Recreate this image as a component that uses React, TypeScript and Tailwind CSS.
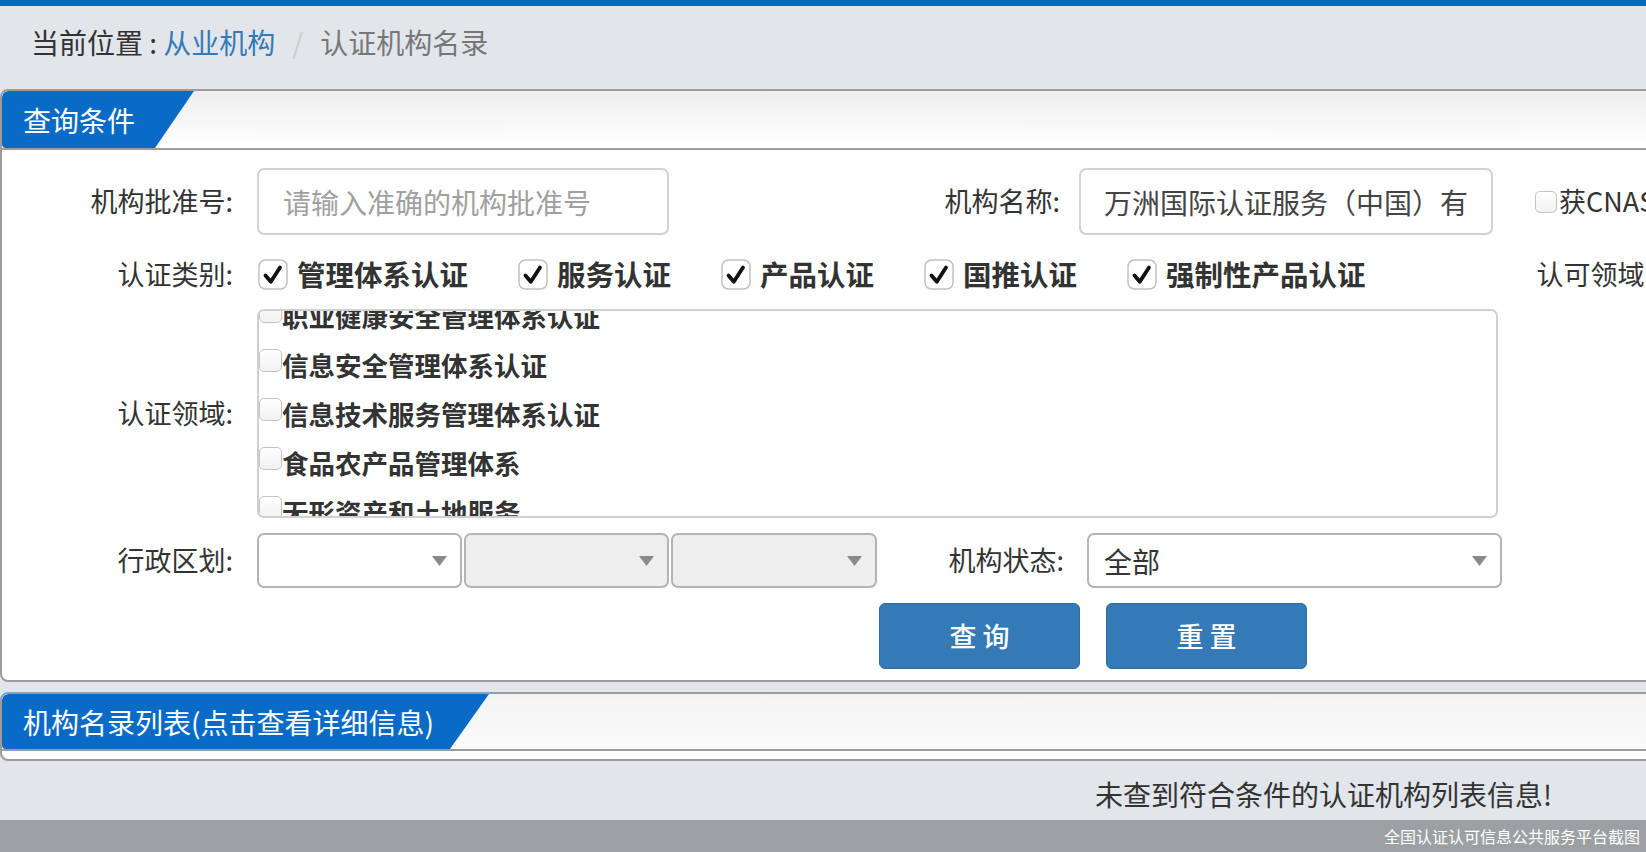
import React from "react";

function CheckedBox() {
  return (
    <svg width="30" height="31" viewBox="0 0 30 31" className="shrink-0">
      <rect x="1" y="1" width="28" height="29" rx="6.5" fill="#ffffff" stroke="#c2c2c2" strokeWidth="1.5" />
      <path d="M7.5 16.5 L12.8 22.8 L22 8.5" fill="none" stroke="#111" strokeWidth="3.8" strokeLinecap="round" strokeLinejoin="round" />
    </svg>
  );
}

function EmptyBox({ size = "w-[21px] h-[21px]" }: { size?: string }) {
  return (
    <span className={`block ${size} shrink-0 rounded-[5px] border border-[#c4c4c4] bg-gradient-to-b from-[#ffffff] to-[#f1f1f1]`} />
  );
}

function Arrow() {
  return (
    <svg width="15" height="10" viewBox="0 0 15 10" className="shrink-0">
      <polygon points="0,0 15,0 7.5,10" fill="#8a8a8a" />
    </svg>
  );
}

function Tab({ text, width }: { text: string; width: string }) {
  return (
    <div
      className={`${width} h-full bg-[#0a6bc7] rounded-tl-[6px] rounded-bl-[4px] flex items-center pl-[21px] text-white text-[28px] whitespace-nowrap [clip-path:polygon(0_0,100%_0,calc(100%-39px)_100%,0_100%)]`}
    >
      {text}
    </div>
  );
}

const cats = ["管理体系认证", "服务认证", "产品认证", "国推认证", "强制性产品认证"];
const fields = [
  "环境管理体系认证",
  "职业健康安全管理体系认证",
  "信息安全管理体系认证",
  "信息技术服务管理体系认证",
  "食品农产品管理体系",
  "无形资产和土地服务",
  "能源管理体系认证",
];

export default function App() {
  return (
    <div className="w-[1646px] h-[852px] overflow-hidden bg-[#e2e6eb] flex flex-col font-['Noto_Sans_CJK_SC',sans-serif] text-[#333]">
      <div className="h-[6px] shrink-0 bg-[#0a67c6]" />
      <div className="h-[72px] mb-[11px] shrink-0 flex items-center pl-[31px] text-[28px] whitespace-nowrap">
        <span className="text-[#333]">当前位置 :&nbsp;</span>
        <span className="text-[#337ab7]">从业机构</span>
        <span className="text-[#cccccc] px-[17px]">/</span>
        <span className="text-[#777]">认证机构名录</span>
      </div>

      {/* panel 1 */}
      <div className="w-[1720px] shrink-0 bg-white border-2 border-[#9c9c9c] rounded-[8px] overflow-hidden">
        <div className="h-[59px] border-b-2 border-[#9c9c9c] bg-gradient-to-b from-[#eeeeee] to-[#ffffff]">
          <Tab text="查询条件" width="w-[192px]" />
        </div>
        <div className="pt-[18px] pb-[11px]">
          {/* row 1 */}
          <div className="h-[67px] flex items-center whitespace-nowrap">
            <div className="w-[231px] text-right text-[27px]">机构批准号:</div>
            <div className="ml-[24px] w-[412px] h-full rounded-[7px] border-2 border-[#d2d2d2] flex items-center pl-[24px] text-[28px] text-[#a0a0a0]">
              请输入准确的机构批准号
            </div>
            <div className="w-[391px] text-right text-[27px]">机构名称:</div>
            <div className="ml-[19px] w-[414px] h-full rounded-[7px] border-2 border-[#d2d2d2] flex items-center pl-[23px] text-[28px] text-[#444] overflow-hidden">
              万洲国际认证服务（中国）有
            </div>
            <div className="ml-[42px] flex items-center">
              <EmptyBox size="w-[22px] h-[22px]" />
              <span className="text-[27px] ml-[2px]">获CNAS认可</span>
            </div>
          </div>

          {/* row 2 */}
          <div className="mt-[19px] h-[40px] flex items-center whitespace-nowrap">
            <div className="w-[231px] text-right text-[27px]">认证类别:</div>
            <div className="ml-[25px] flex items-center gap-[50px]">
              {cats.map((c) => (
                <div key={c} className="flex items-center gap-[9px]">
                  <CheckedBox />
                  <span className="text-[28.5px] font-bold text-[#333]">{c}</span>
                </div>
              ))}
            </div>
            <div className="ml-[171px] text-[27px]">认可领域:</div>
          </div>

          {/* row 3 */}
          <div className="mt-[15px] h-[209px] flex items-center whitespace-nowrap">
            <div className="w-[231px] text-right text-[27px]">认证领域:</div>
            <div className="ml-[24px] w-[1241px] h-full rounded-[7px] border-2 border-[#d0d0d0] overflow-hidden">
              <div className="-mt-[68px]">
                {fields.map((f) => (
                  <div key={f} className="h-[49px] flex items-center">
                    <div className="-mt-[11px]">
                      <EmptyBox size="w-[23px] h-[23px]" />
                    </div>
                    <span className="text-[26.5px] font-bold text-[#333] leading-none">{f}</span>
                  </div>
                ))}
              </div>
            </div>
          </div>

          {/* row 4 */}
          <div className="mt-[15px] h-[55px] flex items-center whitespace-nowrap">
            <div className="w-[231px] text-right text-[27px]">行政区划:</div>
            <div className="ml-[24px] w-[205px] h-full rounded-[7px] border-2 border-[#b4b4b4] bg-white flex items-center justify-end pr-[13px]">
              <Arrow />
            </div>
            <div className="ml-[2px] w-[205px] h-full rounded-[7px] border-2 border-[#b4b4b4] bg-[#eeeeee] flex items-center justify-end pr-[13px]">
              <Arrow />
            </div>
            <div className="ml-[2px] w-[206px] h-full rounded-[7px] border-2 border-[#b4b4b4] bg-[#eeeeee] flex items-center justify-end pr-[13px]">
              <Arrow />
            </div>
            <div className="w-[187px] text-right text-[27px]">机构状态:</div>
            <div className="ml-[23px] w-[415px] h-full rounded-[7px] border-2 border-[#b4b4b4] bg-white flex items-center justify-between pl-[15px] pr-[13px]">
              <span className="text-[28px] text-[#333]">全部</span>
              <Arrow />
            </div>
          </div>

          {/* buttons */}
          <div className="mt-[15px] ml-[877px] flex gap-[26px]">
            <div className="w-[201px] h-[66px] rounded-[6px] bg-[#337ab7] border border-[#2e6da4] flex items-center justify-center text-white text-[27px] font-medium">
              查 询
            </div>
            <div className="w-[201px] h-[66px] rounded-[6px] bg-[#337ab7] border border-[#2e6da4] flex items-center justify-center text-white text-[27px] font-medium">
              重 置
            </div>
          </div>
        </div>
      </div>

      {/* panel 2 */}
      <div className="mt-[10px] w-[1720px] shrink-0 bg-white border-2 border-[#9c9c9c] rounded-[8px] overflow-hidden">
        <div className="h-[57px] border-b-2 border-[#9c9c9c] bg-gradient-to-b from-[#f4f4f4] to-[#fafafa]">
          <Tab text="机构名录列表(点击查看详细信息)" width="w-[487px]" />
        </div>
        <div className="h-[8px]" />
      </div>

      <div className="h-[59px] shrink-0 flex items-center justify-end pr-[94px] pt-[6px] text-[28px] text-[#333] whitespace-nowrap">
        未查到符合条件的认证机构列表信息!
      </div>
      <div className="flex-1 bg-[#9da0a3] flex items-center justify-end pr-[6px] text-white text-[16px] whitespace-nowrap">
        全国认证认可信息公共服务平台截图
      </div>
    </div>
  );
}
